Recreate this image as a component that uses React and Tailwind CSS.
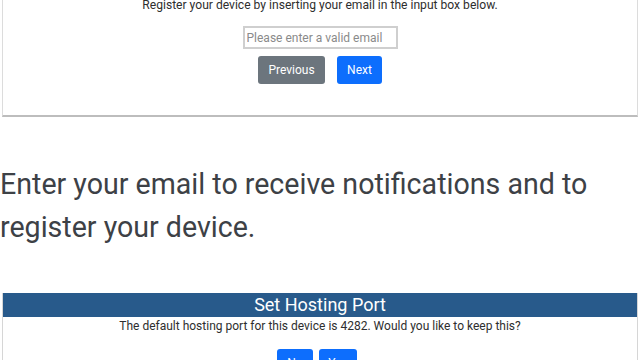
import React from "react";

const App = () => {
  return (
    <div className="w-[640px] h-[360px] overflow-hidden bg-white font-['Roboto',sans-serif]">
      {/* register card, top cut off */}
      <div className="mx-[2px] border-x border-[#dcdcdc] border-b-2 border-b-[#bdbdbd] pb-[31px] flex flex-col items-center">
        <p className="text-[12.1px] leading-[12px] text-[#2e2e2e] -mt-[1px]">
          Register your device by inserting your email in the input box below.
        </p>
        <input
          type="email"
          placeholder="Please enter a valid email"
          className="mt-[15px] w-[155px] h-[23px] border-2 border-[#cfcfcf] px-[2px] text-[12px] text-[#333] placeholder:text-[#8a8a8a] outline-none"
        />
        <div className="mt-[7px] flex gap-[12px]">
          <button className="h-[28px] w-[67px] rounded-[3px] bg-[#6c757d] text-[12px] text-white">Previous</button>
          <button className="h-[28px] w-[45px] rounded-[3px] bg-[#0d6efd] text-[12px] text-white">Next</button>
        </div>
      </div>

      <p className="mt-[46px] text-[28.6px] leading-[43px] text-[#3d4146]">
        Enter your email to receive notifications and to register your device.
      </p>

      {/* hosting port card */}
      <div className="mt-[44px] ml-[2px] mr-[2px] border-x border-[#d6d6d6]">
        <div className="h-[24px] bg-[#285a8b] text-white text-[18px] leading-[24px] text-center">Set Hosting Port</div>
        <p className="mt-[1px] text-[12px] leading-[16px] text-[#2e2e2e] text-center">
          The default hosting port for this device is 4282. Would you like to keep this?
        </p>
        <div className="mt-[15px] flex justify-center gap-[6px] pr-[6px]">
          <button className="h-[28px] w-[36px] rounded-[3px] bg-[#0d6efd] text-[12px] text-white">No</button>
          <button className="h-[28px] w-[38px] rounded-[3px] bg-[#0d6efd] text-[12px] text-white">Yes</button>
        </div>
      </div>
    </div>
  );
};

export default App;
